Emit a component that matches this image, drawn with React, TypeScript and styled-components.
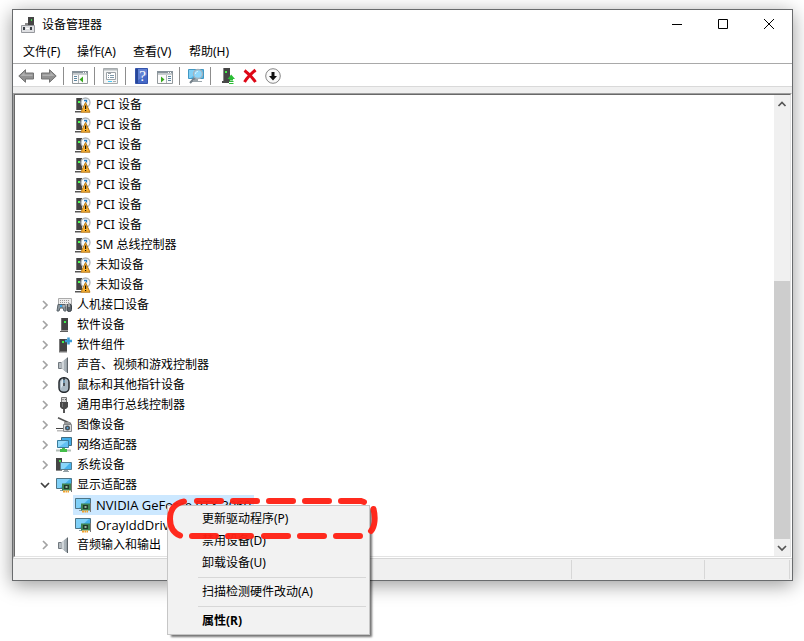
import React from "react";
import styled, { createGlobalStyle, css } from "styled-components";

const GlobalStyle = createGlobalStyle`
  * { box-sizing: border-box; }
  body {
    margin: 0;
    background: #fff;
    color: #000;
    font: 12px/20px "Noto Sans", "Noto Sans CJK SC", sans-serif;
  }
  button { font: inherit; color: inherit; border: 0; background: none; padding: 0; }
  ul { list-style: none; margin: 0; padding: 0; }
  svg { display: block; flex: none; }
`;

const Page = styled.main`
  padding: 9px 11px 60px 12px;
`;

const Window = styled.section`
  position: relative;
  border: 1px solid #696b6d;
  background: #fff;
  box-shadow: 0 4px 18px rgba(0, 0, 0, 0.4);
`;

const TitleBar = styled.header`
  display: flex;
  align-items: center;
  height: 30px;
  padding-left: 8px;
`;

const Title = styled.h1`
  flex: 1;
  margin: 0 0 0 5px;
  font-size: 12px;
  font-weight: 400;
`;

const CaptionButton = styled.button`
  display: grid;
  place-items: center;
  align-self: flex-start;
  width: 46px;
  height: 28px;
`;

const MenuBar = styled.nav`
  display: flex;
  height: 23px;
  padding-left: 2px;
`;

const MenuBarItem = styled.button`
  padding: 0 8px;
  min-width: 54px;
  text-align: left;
  & + & { min-width: 56px; }
`;

const Toolbar = styled.div`
  display: flex;
  padding: 4px 0 2px 1px;
  border-top: 1px solid #a9a9a9;
  border-bottom: 1px solid #d9d9d9;
`;

const ToolButton = styled.button`
  width: 23px;
  height: 16px;
  padding: 0 3px 0 4px;
`;

const ToolSeparator = styled.span`
  width: 1px;
  height: 18px;
  margin: -1px 4px -1px 3px;
  background: #8d8d8d;
`;

const Client = styled.div`
  padding-top: 6px;
  background: #f0f0f0;
`;

const SunkenOuter = styled.div`
  border: 1px solid;
  border-color: #a0a0a0 #fff #fff #a0a0a0;
`;

const SunkenInner = styled.div`
  display: flex;
  border: 1px solid;
  border-color: #696969 #e3e3e3 #e3e3e3 #696969;
  background: #fff;
`;

const Tree = styled.ul`
  flex: 1;
  min-width: 0;
  padding-bottom: 1px;
`;

const TreeRow = styled.li<{ $child?: boolean }>`
  display: flex;
  align-items: center;
  height: 20px;
  padding-left: ${(p) => (p.$child ? "58px" : "23px")};
`;

const Expander = styled.button`
  display: grid;
  place-items: center;
  width: 14px;
  height: 20px;
  margin-right: 2px;
`;

const Node = styled.span<{ $selected?: boolean; $latin?: boolean }>`
  display: flex;
  align-items: center;
  gap: 5px;
  height: 20px;
  padding: 0 3px 0 2px;
  white-space: nowrap;
  ${(p) => p.$latin && css`font-family: "Open Sans", sans-serif; font-size: 13px;`}
  ${(p) => p.$selected && css`background: #cce8ff;`}
`;

const ScrollBar = styled.div`
  display: flex;
  flex-direction: column;
  width: 16px;
  background: #f0f0f0;
`;

const ScrollButton = styled.button`
  display: grid;
  place-items: center;
  height: 17px;
`;

const ScrollTrack = styled.div`
  display: flex;
  flex: 1;
  flex-direction: column;
  justify-content: flex-end;
`;

const ScrollThumb = styled.div`
  height: 60.4%;
  background: #cdcdcd;
`;

const StatusBar = styled.footer`
  display: flex;
  height: 22px;
  padding: 1px 2px 1px 0;
  border-top: 1px solid #d7d7d7;
  background: #f0f0f0;
`;

const StatusCell = styled.span<{ $width?: number }>`
  ${(p) => (p.$width ? `width: ${p.$width}px;` : "flex: 1;")}
  border-right: 1px solid #d7d7d7;
`;

const ContextMenu = styled.div`
  position: absolute;
  left: 154px;
  top: 495px;
  width: 203px;
  padding: 2px;
  border: 1px solid #c6c6c6;
  background: #f2f2f2;
  box-shadow: 3px 3px 2px -1px rgba(0, 0, 0, 0.55);
`;

const ContextItem = styled.button<{ $strong?: boolean }>`
  display: block;
  width: 100%;
  height: 22px;
  padding-left: 32px;
  text-align: left;
  font-weight: ${(p) => (p.$strong ? 700 : 400)};
`;

const ContextSeparator = styled.hr`
  height: 1px;
  margin: 3px 1px 3px 28px;
  border: 0;
  background: #d7d7d7;
`;

const Marker = styled.svg`
  position: absolute;
  left: 154px;
  top: 487px;
  pointer-events: none;
`;

type IconProps = { children: React.ReactNode };
const Icon = ({ children }: IconProps) => (
  <svg width="16" height="16" viewBox="0 0 16 16" aria-hidden="true">{children}</svg>
);

const Tower = () => (
  <>
    <path d="M5 1h7v12H5z" fill="#434343" />
    <path d="M5 1h1v12H5z" fill="#6d6d6d" />
    <path d="M8 4h2v2H8z" fill="#3df04a" />
    <path d="M5 13h7v1H5z" fill="#9a9a9a" />
    <path d="M4 14h8v1H4z" fill="#5d5d5d" />
  </>
);

const Card = () => (
  <>
    <path d="M.5 1.500h15v10H.5z" fill="#45b0ea" stroke="#4e7485" />
    <path d="M1 2h13L4 11H1z" fill="#7fd0f8" />
    <path d="M4 13h3v1H4z" fill="#8b9da5" />
    <path d="M6 6.500h9v7H6z" fill="#3e8251" />
    <path d="M8 8h5v4H8z" fill="#20392c" />
    <path d="M9.500 9h2v2h-2z" fill="#91b59b" />
    <path d="M15 6h1v9h-1z" fill="#777" />
    <path d="M7 13.500h2v2H7zM9.500 13.500h1.500v2H9.500zM11.500 13.500H13v2h-1.500z" fill="#efa22f" />
  </>
);

const Speaker = () => (
  <>
    <path d="M2.500 5.500h3v6h-3z" fill="#b4bbc0" stroke="#70787e" />
    <path d="M5.500 5.500L11 .8v14.900l-5.500-4.500z" fill="#98a1a7" />
    <path d="M5.500 5.500L8 3.500v9.500l-2.500-2z" fill="#cfd5d9" />
    <path d="M8 3.500l2-1.800V15l-2-2z" fill="#aab3b9" />
    <path d="M11.500.5V16" stroke="#5c646a" />
  </>
);

const icons = {
  app: (
    <Icon>
      <path d="M7 0h6v9H7z" fill="#454545" />
      <path d="M10 2h1v2h-1z" fill="#42e349" />
      <path d="M4 6h3v2H4z" fill="#888" />
      <path d="M.5 8.500h13v7H.5z" fill="#dedfe2" stroke="#96989d" />
      <path d="M2 10h2v3H2zM9 10h2v3H9z" fill="#3a4046" />
      <path d="M5 11h3v1H5z" fill="#fff" />
    </Icon>
  ),
  unknown: (
    <Icon>
      <path d="M1 1h6v12H1z" fill="#434343" />
      <path d="M1 1h1v12H1z" fill="#777" />
      <path d="M3 4h2v2H3z" fill="#4dff55" />
      <path d="M0 14h6v1.500H0z" fill="#555" />
      <circle cx="10.500" cy="5.500" r="4.500" fill="#f7fafc" stroke="#adb4b8" strokeWidth="1.300" />
      <path d="M9 3.500h2.500v2" fill="none" stroke="#247ac1" strokeWidth="1.300" />
      <path d="M10.500 5.500L15 15.200H6z" fill="#f9b233" stroke="#b3771b" />
      <path d="M10 8.500h1.200v3.500H10zM10 13h1.200v1H10z" fill="#171309" />
    </Icon>
  ),
  hid: (
    <Icon>
      <path d="M2.500 1.500h13v6h-13z" fill="#eee" stroke="#aaa" />
      <path d="M4 3.500h10M4 5.500h10" stroke="#999" strokeDasharray="1 1" />
      <path d="M2 7.500h7l1 6.500H8l-1-3H4l-1 3H1z" fill="#8b969e" stroke="#5a646b" />
      <path d="M4 8h2v2H4z" fill="#32a8f0" />
      <path d="M7.500 8.500h1v1h-1z" fill="#fff" />
      <rect x="11" y="7" width="4.500" height="7.500" rx="2" fill="#5b646b" stroke="#3a4046" />
      <path d="M13 7v3" stroke="#ddd" />
    </Icon>
  ),
  software: <Icon><Tower /></Icon>,
  component: (
    <Icon>
      <path d="M3 2h8v12H3z" fill="#434343" />
      <path d="M3 2h1v12H3z" fill="#777" />
      <path d="M6 4h2v2H6z" fill="#3df04a" />
      <path d="M3 14h8v1.500H3z" fill="#777" />
      <path d="M9 4h7M12.500 .5v7" stroke="#3a9bd4" strokeWidth="2.500" />
    </Icon>
  ),
  speaker: <Icon><Speaker /></Icon>,
  mouse: (
    <Icon>
      <rect x="3" y=".8" width="10" height="14.500" rx="4.500" fill="#a9b9c4" stroke="#262b2f" strokeWidth="1.500" />
      <path d="M5 7c0-3 1-4.500 2-5v7c-1 0-2 2-2 3z" fill="#d9e5ed" />
      <path d="M8 1v8" stroke="#30363a" strokeWidth="1.500" />
      <path d="M8 3v3" stroke="#8bd3ff" />
    </Icon>
  ),
  usb: (
    <Icon>
      <path d="M5.500.5h5v5h-5z" fill="#d5d5d5" stroke="#777" />
      <path d="M6.500 2h1v1h-1zM9 2h1v1H9z" fill="#555" />
      <path d="M4 5h8v5l-2 2H6l-2-2z" fill="#4a4a4a" />
      <path d="M6 6h1v4H6z" fill="#777" />
      <path d="M8 12v4" stroke="#555" strokeWidth="2" />
    </Icon>
  ),
  imaging: (
    <Icon>
      <path d="M2 .8l13 6" stroke="#555" strokeWidth="1.500" />
      <path d="M7.500 7.500h8v7h-8z" fill="#d8dadb" stroke="#85888b" />
      <path d="M8 5h5l2 2H8z" fill="#999" />
      <path d="M0 11.500h7" stroke="#444" />
      <path d="M1 13h6v1.500H1z" fill="#bbb" />
      <circle cx="11.500" cy="11" r="2.500" fill="#4b535a" />
      <circle cx="11.500" cy="11" r="1" fill="#51a6de" />
    </Icon>
  ),
  network: (
    <Icon>
      <path d="M5.500.5h10v8h-10z" fill="#44aee9" stroke="#416c80" />
      <path d="M1.500 3.500h11v7h-11z" fill="#62c1f4" stroke="#3b7c9b" />
      <path d="M2 4h9l-8 6H2z" fill="#92dafb" />
      <path d="M0 13.500h15" stroke="#b3beb8" strokeWidth="2" />
      <path d="M6 11h3v1h2v3H4v-3h2z" fill="#44bd4a" />
    </Icon>
  ),
  system: (
    <Icon>
      <path d="M0 1h6v12H0z" fill="#454545" />
      <path d="M3 3h2v2H3z" fill="#47e04e" />
      <path d="M0 13h6v1H0z" fill="#888" />
      <path d="M4.500 5.500h11v7h-11z" fill="#48b2ed" stroke="#557e91" />
      <path d="M5 6h9l-6 6H5z" fill="#89d6fb" />
      <path d="M8 13h4v1.500H8zM7 14h6v1H7z" fill="#95a1a7" />
    </Icon>
  ),
  display: <Icon><Card /></Icon>,
};

const toolIcons = {
  back: (
    <Icon>
      <path d="M.8 8L7.500 1.700V5h8v6h-8v3.300z" fill="#919191" stroke="#737373" />
      <path d="M2.500 8l4-4v2.500h8V8z" fill="#b0b0b0" />
    </Icon>
  ),
  forward: (
    <Icon>
      <path d="M15.200 8L8.500 1.700V5h-8v6h8v3.300z" fill="#919191" stroke="#737373" />
      <path d="M13.500 8l-4-4v2.500h-8V8z" fill="#b0b0b0" />
    </Icon>
  ),
  tree: (
    <Icon>
      <path d="M.5 3.500h15v12H.5z" fill="#fbfbfb" stroke="#93999c" />
      <path d="M0 3h16v2.500H0z" fill="#87929a" />
      <path d="M11 4h1v1h-1zM13 4h1v1h-1z" fill="#fff" />
      <path d="M1 6.500h14" stroke="#c9cdd0" />
      <path d="M6.500 7v8" stroke="#aeb3b5" />
      <path d="M2 8.500h3M2 10.500h3M2 12.500h3" stroke="#5d86a0" />
      <path d="M11 8.500v6l-3.500-3z" fill="#38a81f" />
    </Icon>
  ),
  properties: (
    <Icon>
      <path d="M.5.5h14v15H.5z" fill="#f4f5f5" stroke="#a6abad" />
      <path d="M1 1h13v1.500H1z" fill="#b5babd" />
      <path d="M3.500 4.500h9v7h-9z" fill="#fff" stroke="#9ba2a7" />
      <path d="M5 4h3v2H5z" fill="#9aa1a6" />
      <path d="M5 7.500h1M7 7.500h4M5 9.500h1M7 9.500h4" stroke="#7d98a9" />
      <path d="M5 13h4v1H5z" fill="#49c8f4" />
      <path d="M10 13h3v1h-3z" fill="#a7adb0" />
    </Icon>
  ),
  help: (
    <Icon>
      <path d="M1.500.5h12v15h-12z" fill="#4468c7" stroke="#3453ac" />
      <path d="M2 1h2v14H2z" fill="#274798" />
      <path d="M4 1h9v6L4 12z" fill="#6180d2" />
      <text x="8.500" y="13" textAnchor="middle" fontFamily="Liberation Serif" fontSize="15" fill="#fff">?</text>
    </Icon>
  ),
  action: (
    <Icon>
      <path d="M.5 3.500h15v12H.5z" fill="#fbfbfb" stroke="#93999c" />
      <path d="M0 3h16v2.500H0z" fill="#87929a" />
      <path d="M11 4h1v1h-1zM13 4h1v1h-1z" fill="#fff" />
      <path d="M1 6.500h14" stroke="#c9cdd0" />
      <path d="M9.500 7v8" stroke="#aeb3b5" />
      <path d="M11 8.500h3M11 10.500h3M11 12.500h3" stroke="#5d86a0" />
      <path d="M4 8.500v6l3.500-3z" fill="#38a81f" />
    </Icon>
  ),
  scan: (
    <Icon>
      <path d="M.5 1.500h15v9H.5z" fill="#50b5e9" stroke="#4298c3" />
      <path d="M1 2h10L3 10H1z" fill="#80cff5" />
      <path d="M3 13h11v1H3zM6 11h4v2H6z" fill="#9aa5ab" />
      <path d="M7 9.500L2 15" stroke="#75828b" strokeWidth="2" />
      <circle cx="10" cy="6" r="4.500" fill="#8dd6fa" stroke="#a5b3bd" strokeWidth="1.300" />
      <path d="M7.500 6c0-2 1-2.500 2.500-2.500" fill="none" stroke="#d7f3ff" />
    </Icon>
  ),
  update: (
    <Icon>
      <path d="M4 0h7v13H4z" fill="#454545" />
      <path d="M4 0h1v13H4z" fill="#888" />
      <path d="M6 3h2v2H6z" fill="#46f04b" />
      <path d="M3 13h7v2H3z" fill="#494949" />
      <path d="M12.200 6.500L16 11h-2v1.500h-3.500V11h-2z" fill="#2bbd35" />
      <path d="M10 13h4.500v1H10zM10 15h4.500v1H10z" fill="#2bbd35" />
    </Icon>
  ),
  remove: (
    <Icon>
      <path d="M2.500 2.500C6 5 10 9 13.500 14M13.500 2C9.500 5.500 5.500 9 2.500 14" fill="none" stroke="#de0716" strokeWidth="3" />
    </Icon>
  ),
  disable: (
    <Icon>
      <circle cx="8" cy="8" r="7.300" fill="#fafafa" stroke="#858585" />
      <path d="M6.500 4h3v4H12l-4 4.500L4 8h2.500z" fill="#111" />
    </Icon>
  ),
};

const Chevron = ({ dir, color }: { dir: "right" | "down" | "up"; color: string }) => (
  <svg width="10" height="10" viewBox="0 0 10 10" aria-hidden="true">
    <path
      d={{ right: "M3 1l4 4-4 4", down: "M1 3l4 4 4-4", up: "M1.500 7L5 3.500 8.500 7" }[dir]}
      fill="none"
      stroke={color}
      strokeWidth="1.700"
    />
  </svg>
);

type IconName = keyof typeof icons;
type NodeData = {
  label: string;
  icon: IconName;
  child?: boolean;
  open?: boolean;
  selected?: boolean;
  latin?: boolean;
};

const nodes: NodeData[] = [
  ...Array.from({ length: 7 }, (): NodeData => ({ label: "PCI 设备", icon: "unknown", child: true })),
  { label: "SM 总线控制器", icon: "unknown", child: true },
  { label: "未知设备", icon: "unknown", child: true },
  { label: "未知设备", icon: "unknown", child: true },
  { label: "人机接口设备", icon: "hid" },
  { label: "软件设备", icon: "software" },
  { label: "软件组件", icon: "component" },
  { label: "声音、视频和游戏控制器", icon: "speaker" },
  { label: "鼠标和其他指针设备", icon: "mouse" },
  { label: "通用串行总线控制器", icon: "usb" },
  { label: "图像设备", icon: "imaging" },
  { label: "网络适配器", icon: "network" },
  { label: "系统设备", icon: "system" },
  { label: "显示适配器", icon: "display", open: true },
  { label: "NVIDIA GeForce RTX 3060", icon: "display", child: true, selected: true, latin: true },
  { label: "OrayIddDriver Device", icon: "display", child: true, latin: true },
  { label: "音频输入和输出", icon: "speaker" },
];

const tools: [keyof typeof toolIcons, string][][] = [
  [["back", "后退"], ["forward", "前进"]],
  [["tree", "显示/隐藏控制台树"]],
  [["properties", "属性"]],
  [["help", "帮助"], ["action", "显示/隐藏操作窗格"]],
  [["scan", "扫描检测硬件改动"]],
  [["update", "更新驱动程序"], ["remove", "卸载设备"], ["disable", "禁用设备"]],
];

export default function App() {
  return (
    <Page>
      <GlobalStyle />
      <Window aria-label="设备管理器">
        <TitleBar>
          {icons.app}
          <Title>设备管理器</Title>
          <CaptionButton aria-label="最小化">
            <svg width="12" height="12"><path d="M1 6.500h10" stroke="#000" /></svg>
          </CaptionButton>
          <CaptionButton aria-label="最大化">
            <svg width="12" height="12"><path d="M1.500 1.500h9v9h-9z" fill="none" stroke="#000" /></svg>
          </CaptionButton>
          <CaptionButton aria-label="关闭">
            <svg width="12" height="12"><path d="M1 1l10 10M11 1L1 11" stroke="#000" /></svg>
          </CaptionButton>
        </TitleBar>
        <MenuBar>
          {["文件(F)", "操作(A)", "查看(V)", "帮助(H)"].map((m) => (
            <MenuBarItem key={m}>{m}</MenuBarItem>
          ))}
        </MenuBar>
        <Toolbar role="toolbar">
          {tools.map((group, i) => (
            <React.Fragment key={i}>
              {i > 0 && <ToolSeparator />}
              {group.map(([name, label]) => (
                <ToolButton key={name} aria-label={label}>{toolIcons[name]}</ToolButton>
              ))}
            </React.Fragment>
          ))}
        </Toolbar>
        <Client>
          <SunkenOuter>
            <SunkenInner>
              <Tree role="tree">
                {nodes.map((n, i) => (
                  <TreeRow key={i} role="treeitem" aria-selected={!!n.selected} $child={n.child}>
                    {!n.child && (
                      <Expander aria-label={n.open ? "折叠" : "展开"}>
                        <Chevron dir={n.open ? "down" : "right"} color={n.open ? "#404040" : "#a3a3a3"} />
                      </Expander>
                    )}
                    <Node $selected={n.selected} $latin={n.latin}>
                      {icons[n.icon]}
                      {n.label}
                    </Node>
                  </TreeRow>
                ))}
              </Tree>
              <ScrollBar>
                <ScrollButton aria-label="向上滚动"><Chevron dir="up" color="#555" /></ScrollButton>
                <ScrollTrack><ScrollThumb /></ScrollTrack>
                <ScrollButton aria-label="向下滚动"><Chevron dir="down" color="#555" /></ScrollButton>
              </ScrollBar>
            </SunkenInner>
          </SunkenOuter>
        </Client>
        <StatusBar>
          <StatusCell />
          <StatusCell $width={133} />
          <StatusCell $width={85} />
        </StatusBar>
        <ContextMenu role="menu">
          <ContextItem role="menuitem">更新驱动程序(P)</ContextItem>
          <ContextItem role="menuitem">禁用设备(D)</ContextItem>
          <ContextItem role="menuitem">卸载设备(U)</ContextItem>
          <ContextSeparator />
          <ContextItem role="menuitem">扫描检测硬件改动(A)</ContextItem>
          <ContextSeparator />
          <ContextItem role="menuitem" $strong>属性(R)</ContextItem>
        </ContextMenu>
        <Marker width="214" height="46" viewBox="167 497 214 46" aria-hidden="true">
          <g fill="none" stroke="#ff2115" strokeOpacity=".96" strokeWidth="6" strokeLinecap="round">
            <path d="M184 501.500C175 503 170 510 170 519C170 528 174 533 180 535.500" />
            <path d="M197 501h24M233 501h24M269 501h24M305 501h24M341 501h20l3 1" />
            <path d="M192 536h24M228 536h23M264 536h24M300 536h24M336 536h24" />
            <path d="M373.500 509C375.500 517 375 526 371 531" />
          </g>
        </Marker>
      </Window>
    </Page>
  );
}
